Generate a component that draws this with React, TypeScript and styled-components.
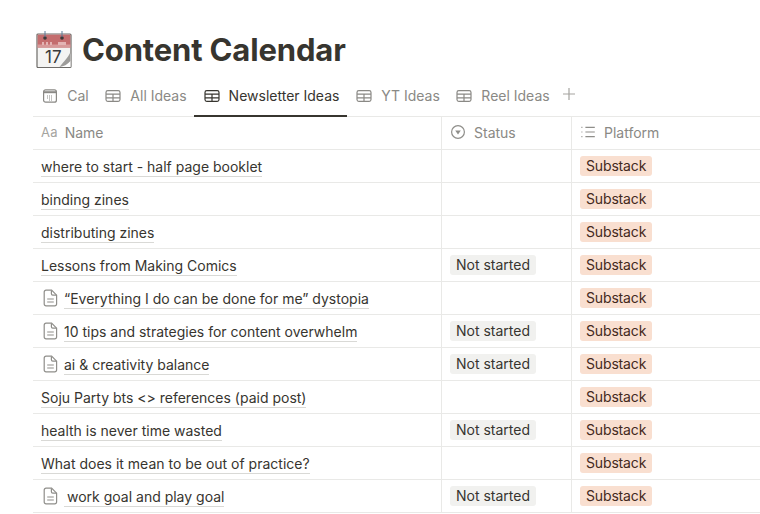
import React from "react";
import styled, { createGlobalStyle } from "styled-components";

const Global = createGlobalStyle`
  html, body { margin: 0; padding: 0; background: #fff; overflow: hidden; }
  body { font-family: Inter, "Liberation Sans", sans-serif; color: #37352f; }
`;

const Page = styled.div`
  width: 760px;
  height: 514px;
  overflow: hidden;
  padding: 31px 0 0 33px;
  box-sizing: border-box;
`;

const TitleRow = styled.div`
  display: flex;
  align-items: center;
  height: 38px;
  gap: 10px;
  padding-left: 3px;
`;

const Title = styled.h1`
  margin: 0;
  font-size: 31px;
  line-height: 38px;
  font-weight: 700;
  letter-spacing: -0.15px;
  color: #37352f;
`;

const Tabs = styled.div`
  display: flex;
  align-items: stretch;
  height: 33px;
  margin-top: 15px;
  box-shadow: inset 0 -1px 0 #e9e9e7;
`;

const Tab = styled.div<{ $active?: boolean; $w: number }>`
  display: flex;
  align-items: center;
  justify-content: center;
  gap: 9px;
  width: ${(p) => p.$w}px;
  height: 33px;
  box-sizing: border-box;
  padding: 2px 0 10px 2px;
  font-size: 14px;
  font-weight: 400;
  color: ${(p) => (p.$active ? "#37352f" : "#8a8985")};
  border-bottom: 2px solid ${(p) => (p.$active ? "#37352f" : "transparent")};
`;

const AddTab = styled.div`
  display: flex;
  align-items: flex-start;
  padding: 2px 0 0 4px;
  color: #a5a4a0;
`;

const Row = styled.div`
  display: grid;
  grid-template-columns: 408px 130px 1fr;
  height: 33px;
  box-sizing: border-box;
  border-bottom: 1px solid #e9e9e7;
`;

const Cell = styled.div`
  display: flex;
  align-items: center;
  box-sizing: border-box;
  padding: 0 8px;
  min-width: 0;
  white-space: nowrap;
  & + & {
    border-left: 1px solid #e9e9e7;
  }
`;

const HeadCell = styled(Cell)`
  gap: 8px;
  padding-bottom: 2px;
  font-size: 14px;
  color: #8a8985;
`;

const AaMark = styled.span`
  font-size: 13px;
  color: #a5a4a0;
  letter-spacing: 0.2px;
  margin-right: -1px;
`;

const NameLink = styled.span<{ $pad?: boolean }>`
  font-size: 14px;
  line-height: 18px;
  font-weight: 400;
  color: #37352f;
  margin-top: 3px;
  border-bottom: 1px solid #d9d9d6;
  padding-left: ${(p) => (p.$pad ? "3px" : "0")};
`;

const PageGlyph = styled.svg`
  flex: none;
  margin: 0 6px 0 2px;
`;

const Tag = styled.span<{ $tone: "status" | "platform" }>`
  display: inline-block;
  height: 20px;
  line-height: 20px;
  padding: 0 6px;
  border-radius: 3px;
  font-size: 14px;
  letter-spacing: ${(p) => (p.$tone === "platform" ? "-0.15px" : "0")};
  background: ${(p) => (p.$tone === "status" ? "#f1f1ef" : "#f9dfd0")};
  color: ${(p) => (p.$tone === "status" ? "#37352f" : "#44291c")};
`;

const TableIcon = () => (
  <svg width="16" height="16" viewBox="0 0 16 16" fill="none" stroke="currentColor" strokeWidth="1.2">
    <rect x="1" y="2.6" width="14" height="10.8" rx="1.8" />
    <path d="M1 6.2h14M1 9.8h14M8 6.2v7.2" />
  </svg>
);

const CalIcon = () => (
  <svg width="16" height="16" viewBox="0 0 16 16" fill="none" stroke="currentColor" strokeWidth="1.2">
    <rect x="1.6" y="1.8" width="12.8" height="12.4" rx="2" />
    <path d="M2 4.2h12" strokeWidth="2" />
    <path d="M5 8h6M5 10h6M7 12h3" strokeWidth="1.1" strokeDasharray="1 1" />
  </svg>
);

const FileIcon = () => (
  <PageGlyph width="15" height="18" viewBox="0 0 15 18" fill="none" stroke="#8f8e8a" strokeWidth="1.2">
    <path d="M3 1.2h5.6l5 5V15a1.8 1.8 0 0 1-1.8 1.8H3A1.8 1.8 0 0 1 1.2 15V3A1.8 1.8 0 0 1 3 1.2z" />
    <path d="M8.4 1.4v3.4a1.4 1.4 0 0 0 1.4 1.4h3.6M4.2 10h6.6M4.2 13h6.6" />
  </PageGlyph>
);

const StatusIcon = () => (
  <svg width="16" height="16" viewBox="0 0 16 16" fill="none" stroke="#8f8e8a" strokeWidth="1.2">
    <circle cx="8" cy="8" r="6.4" />
    <path d="M5.2 6.6h5.6L8 10.4z" fill="#8f8e8a" stroke="none" />
  </svg>
);

const ListIcon = () => (
  <svg width="16" height="16" viewBox="0 0 16 16" fill="none" stroke="#8f8e8a" strokeWidth="1.2">
    <path d="M5.4 3.4h9.4M5.4 8h9.4M5.4 12.6h9.4" />
    <path d="M1.4 3.4h2M1.4 8h2M1.4 12.6h2" strokeDasharray="1 1" />
  </svg>
);

const PlusIcon = () => (
  <svg width="16" height="16" viewBox="0 0 16 16" fill="none" stroke="currentColor" strokeWidth="1.2">
    <path d="M8 2v12M2 8h12" />
  </svg>
);

const CalendarEmoji = () => (
  <svg width="36" height="38" viewBox="0 -2 36 38">
    <rect x="1" y="1" width="34" height="33.5" rx="1" fill="#f4f4f3" stroke="#6d6b68" strokeWidth="1.2" />
    <rect x="1.6" y="1.6" width="32.8" height="13" fill="#c46d6e" />
    <rect x="1.6" y="11.5" width="32.8" height="3" fill="#d79a9a" />
    <path d="M6 9h2v3H6zM10 9h2v3h-2zM14 9h2v3h-2zM22 9h8v3h-8z" fill="#e3b4b4" />
    <circle cx="9" cy="5" r="1.8" fill="#3c3a3a" />
    <circle cx="26" cy="5" r="1.8" fill="#3c3a3a" />
    <path d="M9 -2v6M26 -2v6" stroke="#5b7a99" strokeWidth="1" />
    <text x="9" y="30" fontFamily="Inter, sans-serif" fontSize="17" fill="#3a3a3a">17</text>
    <path d="M34.5 20C33 27 29 31 24 34h10.5z" fill="#fff" />
    <path d="M34.5 19C32 25 28 28 23.5 34c4-.5 8-2.5 11-6z" fill="#9d9c9a" />
  </svg>
);

const rows = [
  { name: "where to start - half page booklet" },
  { name: "binding zines" },
  { name: "distributing zines" },
  { name: "Lessons from Making Comics", status: true },
  { name: "“Everything I do can be done for me” dystopia", file: true },
  { name: "10 tips and strategies for content overwhelm", file: true, status: true },
  { name: "ai & creativity balance", file: true, status: true },
  { name: "Soju Party bts <> references (paid post)" },
  { name: "health is never time wasted", status: true },
  { name: "What does it mean to be out of practice?" },
  { name: "work goal and play goal", file: true, status: true, pad: true },
];

export default function App() {
  return (
    <Page>
      <Global />
      <TitleRow>
        <CalendarEmoji />
        <Title>Content Calendar</Title>
      </TitleRow>
      <Tabs>
        <Tab $w={63}><CalIcon />Cal</Tab>
        <Tab $w={98}><TableIcon />All Ideas</Tab>
        <Tab $active $w={153}><TableIcon />Newsletter Ideas</Tab>
        <Tab $w={100}><TableIcon />YT Ideas</Tab>
        <Tab $w={110}><TableIcon />Reel Ideas</Tab>
        <AddTab><PlusIcon /></AddTab>
      </Tabs>
      <Row>
        <HeadCell><AaMark>Aa</AaMark>Name</HeadCell>
        <HeadCell><StatusIcon />Status</HeadCell>
        <HeadCell><ListIcon />Platform</HeadCell>
      </Row>
      {rows.map((r) => (
        <Row key={r.name}>
          <Cell>
            {r.file && <FileIcon />}
            <NameLink $pad={r.pad}>{r.name}</NameLink>
          </Cell>
          <Cell>{r.status && <Tag $tone="status">Not started</Tag>}</Cell>
          <Cell><Tag $tone="platform">Substack</Tag></Cell>
        </Row>
      ))}
    </Page>
  );
}
